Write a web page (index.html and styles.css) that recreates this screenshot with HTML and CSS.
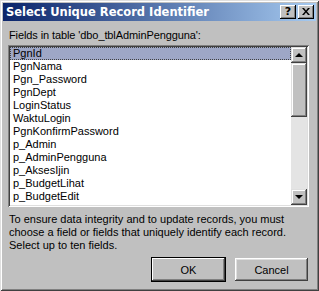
FILE: index.html
```html
<!DOCTYPE html>
<html lang="en">
<head>
    <meta charset="UTF-8">
    <title>Select Unique Record Identifier</title>
    <link rel="stylesheet" href="styles.css">
</head>
<body>
    <div class="window">
        <div class="titlebar">
            <span class="caption">Select Unique Record Identifier</span>
            <div class="caption-buttons">
                <button class="cap-btn help">?</button>
                <button class="cap-btn close">
                    <svg width="8" height="7" viewBox="0 0 8 7"><path d="M0 0h2l2 2.5L6 0h2L5 3.5L8 7H6L4 4.5L2 7H0l3-3.5z" fill="#000"/></svg>
                </button>
            </div>
        </div>

        <div class="content">
            <div class="label">Fields in table 'dbo_tblAdminPengguna':</div>

            <div class="listbox">
                <ul class="items">
                    <li class="selected">PgnId</li>
                    <li>PgnNama</li>
                    <li>Pgn_Password</li>
                    <li>PgnDept</li>
                    <li>LoginStatus</li>
                    <li>WaktuLogin</li>
                    <li>PgnKonfirmPassword</li>
                    <li>p_Admin</li>
                    <li>p_AdminPengguna</li>
                    <li>p_AksesIjin</li>
                    <li>p_BudgetLihat</li>
                    <li>p_BudgetEdit</li>
                </ul>
                <div class="scrollbar">
                    <div class="sb-btn"><span class="arrow up"></span></div>
                    <div class="sb-thumb"></div>
                    <div class="sb-track"></div>
                    <div class="sb-btn"><span class="arrow down"></span></div>
                </div>
            </div>

            <p class="info">To ensure data integrity and to update records, you must choose a field or fields that uniquely identify each record. Select up to ten fields.</p>

            <div class="actions">
                <button class="btn default">OK</button>
                <button class="btn">Cancel</button>
            </div>
        </div>
    </div>
</body>
</html>
```

FILE: styles.css
```css
*{
    margin: 0;
    padding: 0;
    box-sizing: border-box;
}

body{
    background: #c0c0c0;
    font-family: "Liberation Sans", Arial, sans-serif;
    font-size: 11px;
    color: #000;
}

.window{
    width: 319px;
    height: 291px;
    padding: 3px;
    background: #c0c0c0;
    box-shadow: inset 1px 1px #dfdfdf, inset -1px -1px #404040, inset 2px 2px #fff, inset -2px -2px #808080;
}

.titlebar{
    height: 18px;
    display: flex;
    align-items: center;
    justify-content: space-between;
    padding: 0 2px 0 3px;
    background: linear-gradient(to right, #0a246a, #a6caf0);

    .caption{
        font-family: "DejaVu Sans", sans-serif;
        font-weight: 700;
        font-size: 11.5px;
        color: #fff;
        white-space: nowrap;
    }
}

.caption-buttons{
    display: flex;
    gap: 2px;
}

.cap-btn{
    width: 16px;
    height: 14px;
    border: none;
    background: #c0c0c0;
    box-shadow: inset -1px -1px #000, inset 1px 1px #fff, inset -2px -2px #808080;
    display: flex;
    align-items: center;
    justify-content: center;
    font-family: "DejaVu Sans", sans-serif;
    font-weight: 700;
    font-size: 11px;
    line-height: 14px;
    padding-bottom: 1px;
}

.content{
    padding: 6px 7px 0 5px;
}

.label{
    height: 18px;
    padding-top: 2px;
    line-height: 13px;
    padding-left: 1px;
    letter-spacing: -0.1px;
}

.listbox{
    display: flex;
    height: 162px;
    background: #fff;
    padding: 2px;
    box-shadow: inset 1px 1px #808080, inset -1px -1px #fff, inset 2px 2px #404040, inset -2px -2px #dfdfdf;
}

.items{
    flex: 1;
    list-style: none;
    overflow: hidden;

    li{
        height: 13px;
        line-height: 13px;
        padding-left: 3px;
        white-space: nowrap;
    }

    .selected{
        background: #9ea7c6;
        outline: 1px dotted #404040;
        outline-offset: -1px;
    }
}

.scrollbar{
    width: 16px;
    display: flex;
    flex-direction: column;
    background: #e4e4e4;
}

.sb-btn, .sb-thumb{
    background: #c0c0c0;
    box-shadow: inset -1px -1px #404040, inset 1px 1px #dfdfdf, inset -2px -2px #808080, inset 2px 2px #fff;
}

.sb-btn{
    height: 16px;
    display: flex;
    align-items: center;
    justify-content: center;
}

.sb-thumb{
    height: 54px;
}

.sb-track{
    flex: 1;
}

.arrow{
    width: 0;
    height: 0;
    border-left: 4px solid transparent;
    border-right: 4px solid transparent;
}

.arrow.up{
    border-bottom: 4px solid #000;
}

.arrow.down{
    border-top: 4px solid #000;
}

.info{
    margin-top: 6px;
    padding-left: 1px;
    line-height: 13px;
}

.actions{
    display: flex;
    justify-content: flex-end;
    gap: 9px;
    margin-top: 6px;
    padding-right: 1px;
}

.btn{
    width: 73px;
    height: 23px;
    border: none;
    background: #c0c0c0;
    font-family: "Liberation Sans", Arial, sans-serif;
    font-size: 11px;
    color: #000;
    box-shadow: inset -1px -1px #404040, inset 1px 1px #fff, inset -2px -2px #808080, inset 2px 2px #dfdfdf;
}

.btn.default{
    width: 75px;
    height: 25px;
    margin-top: -1px;
    box-shadow: inset 0 0 0 1px #000, inset -2px -2px #404040, inset 2px 2px #fff, inset -3px -3px #808080;
}
```
